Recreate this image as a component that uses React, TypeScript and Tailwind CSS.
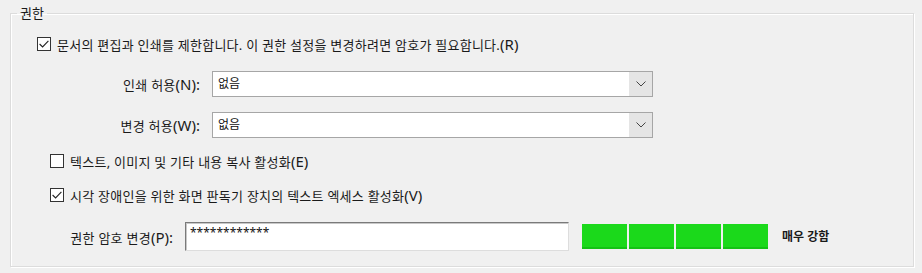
import React from "react";

const font = { fontFamily: '"Noto Sans", "Noto Sans CJK KR", sans-serif' };

// Korean label with a latin accelerator suffix, which renders larger in the original
const Label = ({ text, suffix }: { text: string; suffix: string }) => {
  return (
    <span className="text-[13px] text-[#1a1a1a] leading-none whitespace-nowrap tracking-[0.25px]">
      {text}
      <span className="text-[15px] tracking-normal">{suffix}</span>
    </span>
  );
};

const CheckBox = ({ checked }: { checked: boolean }) => {
  return (
    <span className="w-[14px] h-[14px] border border-[#333333] bg-white flex items-center justify-center shrink-0">
      {checked && (
        <svg width="12" height="12" viewBox="0 0 12 12">
          <path d="M1.6 6 L4.6 9 L10.4 2.8" fill="none" stroke="#222" strokeWidth="1.1" />
        </svg>
      )}
    </span>
  );
};

const CheckRow = ({
  checked,
  text,
  suffix,
  className,
}: {
  checked: boolean;
  text: string;
  suffix: string;
  className: string;
}) => {
  return (
    <div className={`flex items-center h-[20px] gap-[6px] ${className}`}>
      <CheckBox checked={checked} />
      <Label text={text} suffix={suffix} />
    </div>
  );
};

const SelectRow = ({ text, suffix, value, className }: { text: string; suffix: string; value: string; className: string }) => {
  return (
    <div className={`flex items-center ${className}`}>
      <span className="w-[201px] text-right pr-[12px]">
        <Label text={text} suffix={suffix} />
      </span>
      <div className="w-[441px] h-[26px] border border-[#a6a6a6] bg-white flex items-center">
        <span className="flex-1 pl-[5px] text-[12px] text-[#111]">{value}</span>
        <span className="w-[23px] h-full bg-[#e5e5e5] flex items-center justify-center">
          <svg width="10" height="6" viewBox="0 0 10 6">
            <path d="M0.5 0.5 L5 5 L9.5 0.5" fill="none" stroke="#444" strokeWidth="1" />
          </svg>
        </span>
      </div>
    </div>
  );
};

export default function App() {
  return (
    <div className="w-[922px] h-[273px] bg-[#f0f0f0] overflow-hidden" style={font}>
      <fieldset className="ml-[10px] mr-[8px] mt-[5px] h-[262px] border border-[#dcdcdc] shadow-[inset_1px_1px_0_#ffffff,1px_1px_0_#ffffff] pb-[13px]">
        <legend className="ml-[6px] px-[3px] text-[13px] leading-[16px] text-[#1a1a1a]">권한</legend>
        <CheckRow
          checked={true}
          className="ml-[26px] mt-[13px]"
          text="문서의 편집과 인쇄를 제한합니다. 이 권한 설정을 변경하려면 암호가 필요합니다."
          suffix="(R)"
        />
        <SelectRow text="인쇄 허용" suffix="(N):" value="없음" className="mt-[17px]" />
        <SelectRow text="변경 허용" suffix="(W):" value="없음" className="mt-[15px]" />
        <CheckRow checked={false} className="ml-[39px] mt-[13px]" text="텍스트, 이미지 및 기타 내용 복사 활성화" suffix="(E)" />
        <CheckRow
          checked={true}
          className="ml-[39px] mt-[14px]"
          text="시각 장애인을 위한 화면 판독기 장치의 텍스트 엑세스 활성화"
          suffix="(V)"
        />
        <div className="flex items-center mt-[17px]">
          <span className="w-[174px] text-right pr-[12px]">
            <Label text="권한 암호 변경" suffix="(P):" />
          </span>
          <div className="w-[384px] h-[29px] bg-white border border-t-[#7a7a7a] border-l-[#7a7a7a] border-r-[#dddddd] border-b-[#dddddd] shadow-[inset_1px_1px_0_#c8c8c8] pl-[4px] pt-[3px] text-[12px] leading-[14px] text-[#111]">
            ************
          </div>
          <div className="flex gap-[2px] ml-[13px]">
            <span className="w-[45px] h-[25px] bg-[#1bd91b] border-b-2 border-[#14c214]" />
            <span className="w-[45px] h-[25px] bg-[#1bd91b] border-b-2 border-[#14c214]" />
            <span className="w-[45px] h-[25px] bg-[#1bd91b] border-b-2 border-[#14c214]" />
            <span className="w-[45px] h-[25px] bg-[#1bd91b] border-b-2 border-[#14c214]" />
          </div>
          <span className="ml-[14px] text-[12px] font-bold text-[#1a1a1a]">매우 강함</span>
        </div>
      </fieldset>
    </div>
  );
}
